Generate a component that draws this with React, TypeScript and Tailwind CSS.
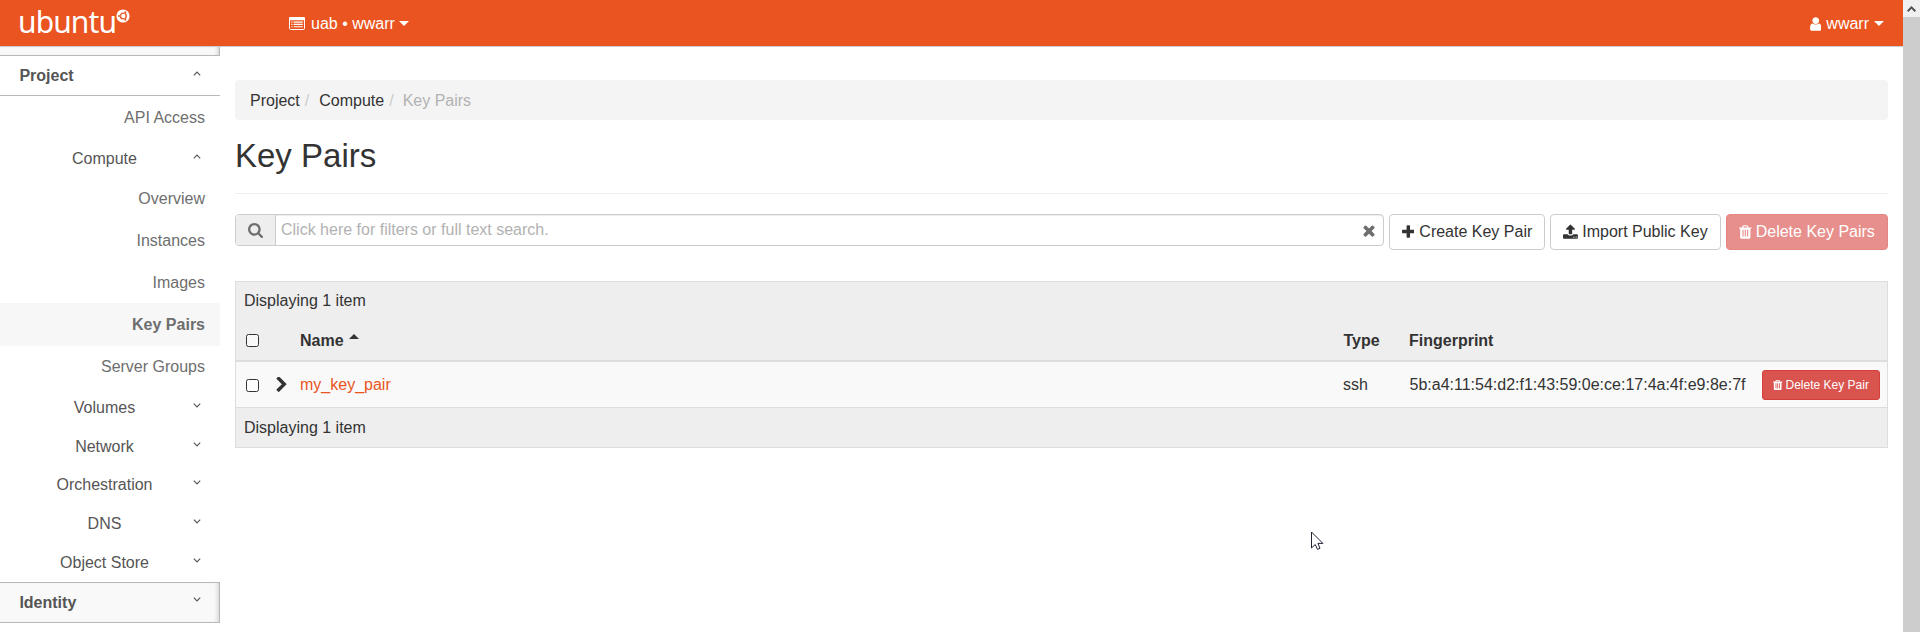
import React from "react";

type IconProps = { box: string; d: string; className: string };

function Icon({ box, d, className }: IconProps) {
  return (
    <svg viewBox={box} className={className} fill="currentColor" aria-hidden="true">
      <path d={d} />
    </svg>
  );
}

const PLUS =
  "M1600 736v192q0 40-28 68t-68 28h-416v416q0 40-28 68t-68 28h-192q-40 0-68-28t-28-68v-416h-416q-40 0-68-28t-28-68v-192q0-40 28-68t68-28h416v-416q0-40 28-68t68-28h192q40 0 68 28t28 68v416h416q40 0 68 28t28 68z";
const SEARCH =
  "M1216 832q0-185-131.5-316.5t-316.5-131.5-316.5 131.5-131.5 316.5 131.5 316.5 316.5 131.5 316.5-131.5 131.5-316.5zm512 832q0 52-38 90t-90 38q-54 0-90-38l-343-342q-179 124-399 124-143 0-273.5-55.5t-225-150-150-225-55.5-273.5 55.5-273.5 150-225 225-150 273.5-55.5 273.5 55.5 225 150 150 225 55.5 273.5q0 220-124 399l343 343q37 37 37 90z";
const TIMES =
  "M1490 1322q0 40-28 68l-136 136q-28 28-68 28t-68-28l-294-294-294 294q-28 28-68 28t-68-28l-136-136q-28-28-28-68t28-68l294-294-294-294q-28-28-28-68t28-68l136-136q28-28 68-28t68 28l294 294 294-294q28-28 68-28t68 28l136 136q28 28 28 68t-28 68l-294 294 294 294q28 28 28 68z";
const CHEVRON_RIGHT =
  "M1363 877l-742 742q-19 19-45 19t-45-19l-166-166q-19-19-19-45t19-45l531-531-531-531q-19-19-19-45t19-45l166-166q19-19 45-19t45 19l742 742q19 19 19 45t-19 45z";
const UPLOAD =
  "M1344 1472q0-26-19-45t-45-19-45 19-19 45 19 45 45 19 45-19 19-45zm256 0q0-26-19-45t-45-19-45 19-19 45 19 45 45 19 45-19 19-45zm128-224v320q0 40-28 68t-68 28h-1472q-40 0-68-28t-28-68v-320q0-40 28-68t68-28h427q21 56 70.5 92t110.5 36h256q61 0 110.5-36t70.5-92h427q40 0 68 28t28 68zm-325-648q-17 40-59 40h-256v448q0 26-19 45t-45 19h-256q-26 0-45-19t-19-45v-448h-256q-42 0-59-40-17-39 14-69l448-448q18-19 45-19t45 19l448 448q31 30 14 69z";
const TRASH =
  "M704 1376v-704q0-14-9-23t-23-9h-64q-14 0-23 9t-9 23v704q0 14 9 23t23 9h64q14 0 23-9t9-23zm256 0v-704q0-14-9-23t-23-9h-64q-14 0-23 9t-9 23v704q0 14 9 23t23 9h64q14 0 23-9t9-23zm256 0v-704q0-14-9-23t-23-9h-64q-14 0-23 9t-9 23v704q0 14 9 23t23 9h64q14 0 23-9t9-23zm-544-992h448l-48-117q-7-9-17-11h-317q-10 2-17 11zm928 32v64q0 14-9 23t-23 9h-96v948q0 83-47 143.5t-113 60.5h-832q-66 0-113-58.5t-47-141.5v-952h-96q-14 0-23-9t-9-23v-64q0-14 9-23t23-9h309l70-167q15-37 54-63t79-26h320q40 0 79 26t54 63l70 167h309q14 0 23 9t9 23z";
const USER =
  "M1536 1399q0 109-62.5 187t-150.5 78h-854q-88 0-150.5-78t-62.5-187q0-85 8.5-160.5t31.5-152 58.5-131 94-89 134.5-34.5q131 128 313 128t313-128q76 0 134.5 34.5t94 89 58.5 131 31.5 152 8.5 160.5zm-256-887q0 159-112.5 271.5t-271.5 112.5-271.5-112.5-112.5-271.5 112.5-271.5 271.5-112.5 271.5 112.5 112.5 271.5z";

function Caret({ up = false }: { up?: boolean }) {
  return (
    <svg viewBox="0 0 10 5" className="h-[5px] w-[10px]" fill="currentColor" aria-hidden="true">
      <path d={up ? "M0 5L5 0L10 5z" : "M0 0h10L5 5z"} />
    </svg>
  );
}

function Angle({ up = false }: { up?: boolean }) {
  return (
    <svg
      viewBox="0 0 8 5"
      className="h-[5px] w-2"
      fill="none"
      stroke="#555"
      strokeWidth="1.15"
      aria-hidden="true"
    >
      <path d={up ? "M0.8 4.3L4 1.1L7.2 4.3" : "M0.8 0.7L4 3.9L7.2 0.7"} />
    </svg>
  );
}

function Logo() {
  return (
    <div className="flex w-[289px] items-start pl-[18px]">
      <span className="-mt-[4px] block w-[98px] whitespace-nowrap font-['Noto_Sans'] text-[30px] leading-[52px] tracking-[-0.9px]">
        ubuntu
      </span>
      <svg viewBox="0 0 14 14" className="mt-[9px] size-[14px]" aria-hidden="true">
        <circle cx="7" cy="7" r="6.6" fill="#fff" />
        <circle cx="7.3" cy="7" r="2.9" fill="none" stroke="#e95420" strokeWidth="1.4" />
        <g stroke="#fff" strokeWidth="0.6">
          <path d="M4.6 7H3M8.6 4.6L9.5 3.2M8.6 9.4L9.5 10.8" />
        </g>
        <g fill="#e95420">
          <circle cx="3" cy="7" r="1" />
          <circle cx="9.4" cy="3.2" r="1" />
          <circle cx="9.4" cy="10.8" r="1" />
        </g>
      </svg>
    </div>
  );
}

function Navbar() {
  return (
    <header className="flex h-[47px] border-b border-[#ccc] bg-[#e95420] text-white">
      <Logo />
      <div className="flex h-[47px] flex-1 items-center">
        <svg viewBox="0 0 16 13" className="mr-[6px] h-[13px] w-4" aria-hidden="true">
          <rect x="0.5" y="0.5" width="15" height="12" rx="1.2" fill="none" stroke="#fff" />
          <path d="M0 1.2Q0 0 1.2 0H14.8Q16 0 16 1.2V3.2H0z" fill="#fff" />
          <path
            d="M2.3 5.1h1.2M4.6 5.1h9.2M2.3 7.4h1.2M4.6 7.4h9.2M2.3 9.7h1.2M4.6 9.7h9.2"
            stroke="#fff"
            strokeWidth="1.1"
          />
        </svg>
        <span className="mr-[4px]">uab • wwarr</span>
        <Caret />
      </div>
      <div className="flex h-[47px] items-center pr-[19px]">
        <Icon box="256 0 1280 1792" d={USER} className="mr-[5px] h-4 w-[11.5px]" />
        <span className="mr-[5px]">wwarr</span>
        <Caret />
      </div>
    </header>
  );
}

function Item({ label, active = false }: { label: string; active?: boolean }) {
  return (
    <div
      className={
        active
          ? "flex h-[43px] items-center justify-end bg-[#f7f7f7] pr-[15px] font-bold text-[#6e6e6e]"
          : "flex h-[42px] items-center justify-end pt-[2px] pr-[15px] text-[#6e6e6e] last:pt-0"
      }
    >
      {label}
    </div>
  );
}

function Category({ label, open = false }: { label: string; open?: boolean }) {
  return (
    <div
      className={
        open
          ? "flex h-[39px] items-center pt-[2px] pr-[19px] text-[#555]"
          : "flex h-[39px] items-center pr-[19px] text-[#555] nth-[n+3]:pb-[2px]"
      }
    >
      <span className="w-[193px] pl-[16px] text-center">{label}</span>
      <span className="-mt-[5px]">
        <Angle up={open} />
      </span>
    </div>
  );
}

function Sidebar() {
  return (
    <nav className="w-[220px] shrink-0">
      <div className="h-[9px] border-r border-b border-[#b8b8b8] bg-[#f9f9f9] shadow-[inset_-4px_0_5px_-3px_rgba(0,0,0,0.18)]" />
      <div className="flex h-10 items-center justify-between border-b border-[#b8b8b8] pr-[19px] pl-[19.4px] font-bold text-[#555]">
        Project
        <span className="-mt-[5px]">
          <Angle up />
        </span>
      </div>
      <div>
        <Item label="API Access" />
        <Category label="Compute" open />
        <Item label="Overview" />
        <Item label="Instances" />
        <Item label="Images" />
        <Item label="Key Pairs" active />
        <Item label="Server Groups" />
      </div>
      <div>
        <Category label="Volumes" />
        <Category label="Network" />
        <Category label="Orchestration" />
        <Category label="DNS" />
        <Category label="Object Store" />
      </div>
      <div className="-mt-px flex h-[41px] items-center justify-between border-y border-r border-[#b8b8b8] bg-[#f9f9f9] pr-[18px] pl-[19.4px] font-bold text-[#555] shadow-[inset_-4px_0_5px_-3px_rgba(0,0,0,0.18)]">
        Identity
        <span className="-mt-[6px]">
          <Angle />
        </span>
      </div>
    </nav>
  );
}

function Toolbar() {
  return (
    <div className="flex h-9 items-start">
      <div className="flex h-8 w-[1149px] rounded border border-[#ccc]">
        <div className="flex w-10 items-center justify-center rounded-l-[3px] border-r border-[#ccc] bg-[#eee] text-[#6e6e6e]">
          <Icon box="64 128 1664 1664" d={SEARCH} className="mt-px size-[15px]" />
        </div>
        <div className="flex flex-1 items-center justify-between rounded-r-[3px] pr-2 pl-[5px] text-[#b2b2b2] shadow-[inset_0_1px_1px_rgba(0,0,0,0.075)]">
          <span>Click here for filters or full text search.</span>
          <Icon box="302 0 1188 1792" d={TIMES} className="h-[17px] w-[12px] text-[#6e6e6e]" />
        </div>
      </div>
      <button className="ml-[5px] flex h-9 w-[156px] items-center justify-center gap-[5px] rounded border border-[#ccc] whitespace-nowrap">
        <Icon box="192 0 1408 1792" d={PLUS} className="h-4 w-[12.6px]" />
        Create Key Pair
      </button>
      <button className="ml-[5px] flex h-9 w-[171px] items-center justify-center gap-1 rounded border border-[#ccc] whitespace-nowrap">
        <Icon box="64 0 1664 1792" d={UPLOAD} className="h-4 w-[14.9px]" />
        Import Public Key
      </button>
      <button className="ml-[5px] flex h-9 w-[162px] items-center justify-center gap-1 rounded border border-[#e58582] bg-[#e78f8c] whitespace-nowrap text-white">
        <Icon box="192 0 1408 1792" d={TRASH} className="h-4 w-[12.6px]" />
        Delete Key Pairs
      </button>
    </div>
  );
}

function Box() {
  return <span className="block size-[13px] rounded-[2.5px] border border-[#333] bg-white/60" />;
}

function KeyTable() {
  return (
    <section className="mt-[31px] border border-[#ddd] bg-[#eee]">
      <div className="flex h-[38px] items-center pl-2">Displaying 1 item</div>
      <div className="grid h-[42px] grid-cols-[64px_1043px_66px_1fr] items-center border-b-2 border-[#ddd] pt-px font-bold">
        <div className="pl-[10px]">
          <Box />
        </div>
        <div className="flex items-center gap-[5px]">
          Name
          <span className="-mt-[8px] flex">
            <Caret up />
          </span>
        </div>
        <div className="pl-[0.5px]">Type</div>
        <div>Fingerprint</div>
      </div>
      <div className="grid h-[46px] grid-cols-[64px_1043px_66px_1fr_125px] items-center border-b border-[#ddd] bg-[#f9f9f9]">
        <div className="flex items-center pl-[10px]">
          <span className="mt-[2px]">
            <Box />
          </span>
          <Icon box="346 90 1036 1550" d={CHEVRON_RIGHT} className="ml-[17px] h-[15px] w-[11px]" />
        </div>
        <div className="text-[#e95420]">my_key_pair</div>
        <div>ssh</div>
        <div className="pl-[0.5px] whitespace-nowrap">5b:a4:11:54:d2:f1:43:59:0e:ce:17:4a:4f:e9:8e:7f</div>
        <button className="flex h-[30px] w-[118px] items-center justify-center gap-[3px] rounded-[3px] border border-[#d43f3a] bg-[#d9534f] text-xs whitespace-nowrap text-white">
          <Icon box="192 0 1408 1792" d={TRASH} className="h-3 w-[9.4px]" />
          Delete Key Pair
        </button>
      </div>
      <div className="flex h-[39px] items-center pl-2">Displaying 1 item</div>
    </section>
  );
}

export default function App() {
  return (
    <div className="relative flex h-[632px] w-full overflow-hidden bg-white font-['Liberation_Sans',Arial,sans-serif] text-base leading-[22px] text-[#333]">
      <div className="flex min-w-0 flex-1 flex-col">
        <Navbar />
        <div className="flex">
          <Sidebar />
          <main className="min-w-0 flex-1 pt-[33px] pr-[15px] pl-[15px]">
            <div className="flex h-10 items-center rounded bg-[#f4f4f4] pt-[2px] pl-[15px]">
              <span>Project</span>
              <span className="pr-[10px] pl-[5px] text-[#ccc]">/</span>
              <span>Compute</span>
              <span className="pr-[9px] pl-[5px] text-[#ccc]">/</span>
              <span className="text-[#b2b2b2]">Key Pairs</span>
            </div>
            <h1 className="mb-5 flex h-[74px] items-center border-b border-[#eee] pb-px text-[33px] leading-[38px]">
              Key Pairs
            </h1>
            <Toolbar />
            <KeyTable />
          </main>
        </div>
      </div>
      <div className="w-[17px] shrink-0 bg-[#cdcdcd]">
        <div className="flex h-[17px] items-center justify-center bg-[#f0f0f0]">
          <svg viewBox="0 0 9 6" className="h-[6px] w-[9px]" fill="none" stroke="#505050" strokeWidth="2" aria-hidden="true">
            <path d="M0.7 5.2L4.5 1.4L8.3 5.2" />
          </svg>
        </div>
      </div>
      <svg viewBox="0 0 13 20" className="absolute top-[531px] left-[1311px] h-5 w-[13px]" aria-hidden="true">
        <path
          d="M0.5 1V17L4.2 13.5L6.5 18.4L9 17.3L6.9 12.4H11.9z"
          fill="#fff"
          stroke="#223"
          strokeWidth="1"
        />
      </svg>
    </div>
  );
}
